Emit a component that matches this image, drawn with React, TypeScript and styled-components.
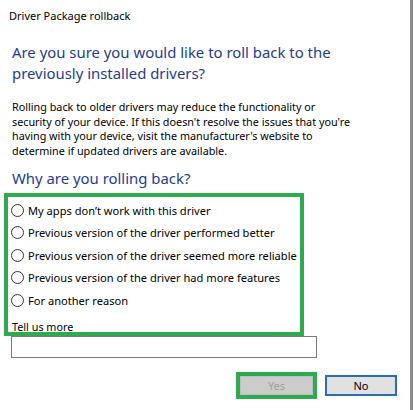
import React, { useState } from "react";
import styled, { createGlobalStyle } from "styled-components";

const GlobalStyle = createGlobalStyle`
  html, body {
    margin: 0;
    padding: 0;
    background: #ffffff;
  }
  body {
    font-family: "Noto Sans", "Open Sans", Arial, sans-serif;
    color: #000;
  }
`;

const reasons = [
  "My apps don’t work with this driver",
  "Previous version of the driver performed better",
  "Previous version of the driver seemed more reliable",
  "Previous version of the driver had more features",
  "For another reason",
];

const App: React.FC = () => {
  const [selected, setSelected] = useState<number | null>(null);

  return (
    <>
      <GlobalStyle />
      <Window>
        <TitleBar>Driver Package rollback</TitleBar>
        <Content>
          <MainInstruction>
            Are you sure you would like to roll back to the
            <br />
            previously installed drivers?
          </MainInstruction>
          <Description>
            Rolling back to older drivers may reduce the functionality or
            <br />
            security of your device. If this doesn't resolve the issues that you're
            <br />
            having with your device, visit the manufacturer's website to
            <br />
            determine if updated drivers are available.
          </Description>
          <SubHeading>Why are you rolling back?</SubHeading>
          <ReasonBox>
            {reasons.map((reason, i) => (
              <RadioRow key={reason} onClick={() => setSelected(i)}>
                <RadioCircle checked={selected === i} />
                <span>{reason}</span>
              </RadioRow>
            ))}
            <TellLabel>Tell us more</TellLabel>
          </ReasonBox>
          <TextInput />
          <ButtonRow>
            <Highlight>
              <DisabledButton disabled>Yes</DisabledButton>
            </Highlight>
            <DefaultButton>No</DefaultButton>
          </ButtonRow>
        </Content>
      </Window>
    </>
  );
};

const Window = styled.div`
  box-sizing: border-box;
  width: 413px;
  height: 410px;
  border-right: 3px solid #8c8c8c;
  background: #fff;
  overflow: hidden;
`;

const TitleBar = styled.div`
  height: 30px;
  padding-left: 9px;
  display: flex;
  align-items: center;
  font-size: 11px;
  color: #000;
`;

const Content = styled.div`
  display: flex;
  flex-direction: column;
`;

const MainInstruction = styled.h1`
  margin: 12px 0 0 12px;
  font-size: 14.9px;
  line-height: 21px;
  font-weight: normal;
  color: #1e3d8f;
`;

const Description = styled.p`
  margin: 16px 0 0 12px;
  font-size: 10.8px;
  line-height: 14.7px;
  color: #000;
  white-space: nowrap;
`;

const SubHeading = styled.h2`
  margin: 9px 0 0 12px;
  font-size: 14.9px;
  line-height: 20px;
  font-weight: normal;
  color: #1e3d8f;
`;

const ReasonBox = styled.div`
  box-sizing: border-box;
  width: 300px;
  height: 143px;
  margin: 5px 0 0 4px;
  border: 4px solid #2eaa4f;
  padding: 2px 0 0 3px;
  display: flex;
  flex-direction: column;
`;

const RadioRow = styled.label`
  display: flex;
  align-items: center;
  gap: 4px;
  height: 22.5px;
  flex-shrink: 0;
  font-size: 11.1px;
  white-space: nowrap;
  cursor: pointer;
`;

const RadioCircle = styled.span<{ checked: boolean }>`
  box-sizing: border-box;
  width: 13px;
  height: 13px;
  border-radius: 50%;
  border: 1px solid #333;
  background: #fff;
  display: flex;
  align-items: center;
  justify-content: center;
  flex-shrink: 0;

  &::after {
    content: "";
    width: 7px;
    height: 7px;
    border-radius: 50%;
    background: ${(p) => (p.checked ? "#333" : "transparent")};
  }
`;

const TellLabel = styled.div`
  margin-top: 8px;
  padding-left: 1px;
  font-size: 10.8px;
`;

const TextInput = styled.input`
  box-sizing: border-box;
  width: 306px;
  height: 22px;
  margin: 0 0 0 11px;
  border: 1px solid #7a7a7a;
  outline: none;
  font-family: inherit;
  font-size: 11px;
`;

const ButtonRow = styled.div`
  display: flex;
  align-items: center;
  justify-content: flex-end;
  gap: 8px;
  margin-top: 14px;
  padding-right: 13px;
`;

const Highlight = styled.div`
  box-sizing: border-box;
  width: 81px;
  height: 27px;
  border: 4px solid #2eaa4f;
  display: flex;
  align-items: center;
  justify-content: center;
`;

const DisabledButton = styled.button`
  box-sizing: border-box;
  width: 73px;
  height: 19px;
  border: 1px solid #bfbfbf;
  background: #cccccc;
  color: #a0a0a0;
  font-family: inherit;
  font-size: 11px;
  padding: 0;
`;

const DefaultButton = styled.button`
  box-sizing: border-box;
  width: 72px;
  height: 21px;
  border: 2px solid #2a6db5;
  background: #e1e1e1;
  color: #000;
  font-family: inherit;
  font-size: 11px;
  padding: 0;
  cursor: pointer;
`;

export default App;
